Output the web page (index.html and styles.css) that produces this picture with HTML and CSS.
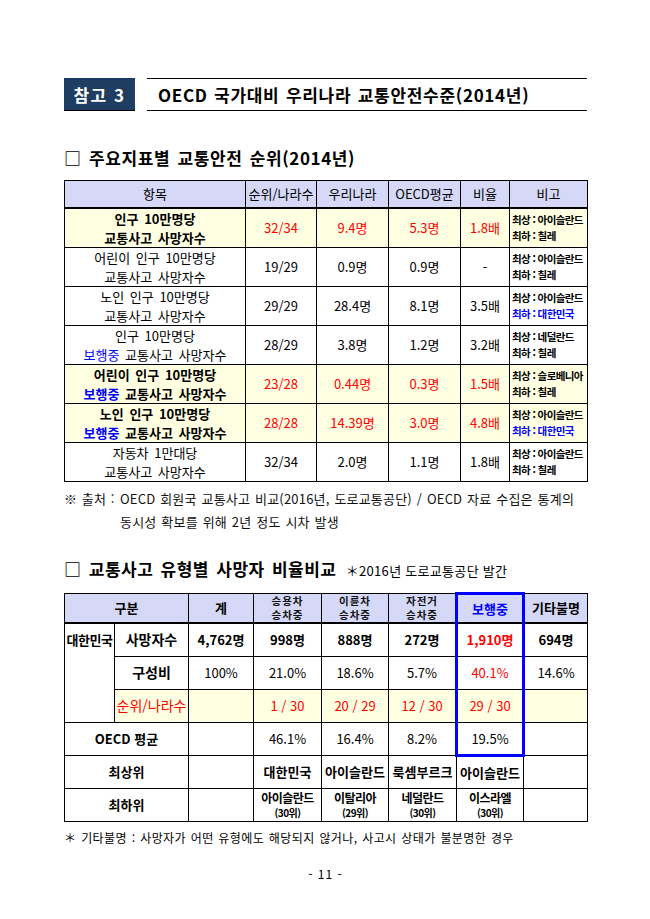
FILE: index.html
```html
<!DOCTYPE html>
<html lang="ko">
<head>
<meta charset="utf-8">
<link rel="stylesheet" href="styles.css">
</head>
<body>
<div class="page">
  <div class="hdr">
    <div class="tag">참고 3</div>
    <div class="title">OECD 국가대비 우리나라 교통안전수준(2014년)</div>
  </div>

  <h2 class="sec sec1">□ 주요지표별 교통안전 순위(2014년)</h2>

  <table class="t1">
    <colgroup>
      <col class="c1a"><col class="c1b"><col class="c1c"><col class="c1d"><col class="c1e"><col class="c1f">
    </colgroup>
    <thead>
      <tr class="th1"><th>항목</th><th>순위/나라수</th><th>우리나라</th><th>OECD평균</th><th>비율</th><th>비고</th></tr>
    </thead>
    <tbody>
      <tr class="hl">
        <td class="item b">인구 10만명당<br>교통사고 사망자수</td>
        <td class="red">32/34</td><td class="red">9.4명</td><td class="red">5.3명</td><td class="red">1.8배</td>
        <td class="note">최상 : 아이슬란드<br>최하 : 칠레</td>
      </tr>
      <tr>
        <td class="item">어린이 인구 10만명당<br>교통사고 사망자수</td>
        <td>19/29</td><td>0.9명</td><td>0.9명</td><td>-</td>
        <td class="note">최상 : 아이슬란드<br>최하 : 칠레</td>
      </tr>
      <tr>
        <td class="item">노인 인구 10만명당<br>교통사고 사망자수</td>
        <td>29/29</td><td>28.4명</td><td>8.1명</td><td>3.5배</td>
        <td class="note">최상 : 아이슬란드<br><span class="blue">최하 : 대한민국</span></td>
      </tr>
      <tr>
        <td class="item">인구 10만명당<br><span class="blue">보행중</span> 교통사고 사망자수</td>
        <td>28/29</td><td>3.8명</td><td>1.2명</td><td>3.2배</td>
        <td class="note">최상 : 네덜란드<br>최하 : 칠레</td>
      </tr>
      <tr class="hl">
        <td class="item b">어린이 인구 10만명당<br><span class="blue">보행중</span> 교통사고 사망자수</td>
        <td class="red">23/28</td><td class="red">0.44명</td><td class="red">0.3명</td><td class="red">1.5배</td>
        <td class="note">최상 : 슬로베니아<br>최하 : 칠레</td>
      </tr>
      <tr class="hl">
        <td class="item b">노인 인구 10만명당<br><span class="blue">보행중</span> 교통사고 사망자수</td>
        <td class="red">28/28</td><td class="red">14.39명</td><td class="red">3.0명</td><td class="red">4.8배</td>
        <td class="note">최상 : 아이슬란드<br><span class="blue">최하 : 대한민국</span></td>
      </tr>
      <tr>
        <td class="item">자동차 1만대당<br>교통사고 사망자수</td>
        <td>32/34</td><td>2.0명</td><td>1.1명</td><td>1.8배</td>
        <td class="note">최상 : 아이슬란드<br>최하 : 칠레</td>
      </tr>
    </tbody>
  </table>

  <div class="src">
    <span class="src-lbl">※ 출처 :</span>
    <span class="src-txt">OECD 회원국 교통사고 비교(2016년, 도로교통공단) / OECD 자료 수집은 통계의<br>동시성 확보를 위해 2년 정도 시차 발생</span>
  </div>

  <h2 class="sec sec2">□ 교통사고 유형별 사망자 비율비교 <span class="sub">＊2016년 도로교통공단 발간</span></h2>

  <table class="t2">
    <colgroup>
      <col class="c2a"><col class="c2b"><col class="c2c"><col class="c2d"><col class="c2e"><col class="c2f"><col class="c2g"><col class="c2h">
    </colgroup>
    <thead>
      <tr class="th2">
        <th colspan="2">구분</th><th>계</th>
        <th class="two"><span class="ln">승용차</span><span class="ln">승차중</span></th>
        <th class="two"><span class="ln">이륜차</span><span class="ln">승차중</span></th>
        <th class="two"><span class="ln">자전거</span><span class="ln">승차중</span></th>
        <th class="bx bx-top blue">보행중</th><th>기타불명</th>
      </tr>
    </thead>
    <tbody>
      <tr class="r2">
        <td rowspan="3" class="kr b">대한민국</td>
        <td class="b lbl">사망자수</td><td class="b">4,762명</td><td class="b">998명</td><td class="b">888명</td><td class="b">272명</td>
        <td class="b red bx">1,910명</td><td class="b">694명</td>
      </tr>
      <tr class="r2">
        <td class="b lbl">구성비</td><td>100%</td><td>21.0%</td><td>18.6%</td><td>5.7%</td>
        <td class="red bx">40.1%</td><td>14.6%</td>
      </tr>
      <tr class="r2 hl">
        <td class="red lbl">순위/나라수</td><td></td><td class="red">1 / 30</td><td class="red">20 / 29</td><td class="red">12 / 30</td>
        <td class="red bx">29 / 30</td><td></td>
      </tr>
      <tr class="r2">
        <td colspan="2" class="b">OECD 평균</td><td></td><td>46.1%</td><td>16.4%</td><td>8.2%</td>
        <td class="bx bx-bot">19.5%</td><td></td>
      </tr>
      <tr class="r2">
        <td colspan="2" class="b">최상위</td><td></td><td class="b">대한민국</td><td class="b">아이슬란드</td><td class="b">룩셈부르크</td>
        <td class="b">아이슬란드</td><td></td>
      </tr>
      <tr class="r2">
        <td colspan="2" class="b">최하위</td><td></td>
        <td class="b low"><span class="nm">아이슬란드</span><span class="rk">(30위)</span></td>
        <td class="b low"><span class="nm">이탈리아</span><span class="rk">(29위)</span></td>
        <td class="b low"><span class="nm">네덜란드</span><span class="rk">(30위)</span></td>
        <td class="b low"><span class="nm">이스라엘</span><span class="rk">(30위)</span></td>
        <td></td>
      </tr>
    </tbody>
  </table>

  <p class="fn">＊ 기타불명 : 사망자가 어떤 유형에도 해당되지 않거나, 사고시 상태가 불분명한 경우</p>

  <p class="pg">- 11 -</p>
</div>
</body>
</html>
```

FILE: styles.css
```css
* { box-sizing: border-box; }
body {
  margin: 0;
  background: #fff;
  font-family: "Noto Sans CJK KR", "Noto Sans", sans-serif;
  color: #000;
}
.page {
  width: 650px;
  padding: 78px 63px 0 64px;
}
.hdr {
  display: flex;
  height: 33px;
}
.tag {
  width: 71px;
  background: #1f3d60;
  color: #fff;
  font-weight: bold;
  font-size: 17px;
  display: flex;
  align-items: center;
  justify-content: center;
  border-bottom: 1px solid #000;
  letter-spacing: 1.5px;
}
.title {
  flex: 1;
  margin-left: 12px;
  border-top: 1px solid #000;
  border-bottom: 1px solid #000;
  display: flex;
  align-items: center;
  padding-left: 11px;
  font-weight: bold;
  font-size: 17px;
  letter-spacing: 0.7px;
  word-spacing: 1px;
}
.sec {
  margin: 0;
  font-size: 17px;
  font-weight: bold;
  line-height: 24px;
  letter-spacing: 0.6px;
  word-spacing: 2px;
}
.sec1 { margin-top: 35px; margin-bottom: 10px; }
.sec2 { margin-top: 24px; margin-bottom: 9px; letter-spacing: 0.5px; }
.sec .sub {
  font-size: 13px;
  font-weight: normal;
  margin-left: 2px;
  letter-spacing: 0.3px;
  word-spacing: 0;
}

table {
  border-collapse: collapse;
  table-layout: fixed;
  width: 523px;
}
th, td {
  border: 1px solid #000;
  padding: 0;
  text-align: center;
  vertical-align: middle;
  font-size: 13px;
  line-height: 17px;
  font-weight: normal;
  white-space: nowrap;
}
.c1a { width: 181px; } .c1b { width: 71px; } .c1c { width: 72px; }
.c1d { width: 72px; } .c1e { width: 49px; } .c1f { width: 78px; }

.th1 th {
  background: #d5d8f6;
  height: 27px;
  border-bottom: 2px solid #000;
}
.t1 tbody td { height: 39px; }
.t1 .item { word-spacing: 2px; line-height: 19px; }
.hl td { background: #ffffe1; }
.b { font-weight: bold; }
.red { color: #ff0000; }
.blue { color: #0000ff; }
.note {
  text-align: left;
  font-size: 10.5px;
  line-height: 15.5px;
  padding-left: 2px;
  font-weight: bold;
  letter-spacing: -0.6px;
}

.src {
  display: flex;
  margin-top: 5px;
  font-size: 13px;
  line-height: 23px;
  color: #111;
}
.src-lbl { width: 56px; flex: none; letter-spacing: 0.5px; }
.src-txt { flex: 1; letter-spacing: 0.2px; word-spacing: 1px; }

.c2a { width: 50px; } .c2b { width: 74px; } .c2c { width: 65px; } .c2d { width: 68px; }
.c2e { width: 67px; } .c2f { width: 68px; } .c2g { width: 67px; } .c2h { width: 64px; }

.th2 th {
  background: #d5d8f6;
  height: 30px;
  font-weight: bold;
  border-bottom: 2px solid #000;
}
.th2 th.two { color: #111; }
.th2 .ln {
  display: block;
  font-size: 10.5px;
  line-height: 14px;
  letter-spacing: 1px;
}
.t2 td { height: 33px; }
.t2 .kr { background: #fff; letter-spacing: -0.5px; vertical-align: top; padding-top: 7px; }
.t2 .lbl { font-size: 14px; }
.bx { border-left: 3px solid #0000ff; border-right: 3px solid #0000ff; }
.bx-top { border-top: 3px solid #0000ff; }
.bx-bot { border-bottom: 3px solid #0000ff; }
.th2 th.bx-top { border-bottom: 2px solid #000; }
.low { letter-spacing: -0.5px; }
.low .nm { display: block; font-size: 12px; line-height: 17.5px; }
.low .rk { display: block; font-size: 10px; line-height: 14.5px; }

.fn {
  margin: 6px 0 0;
  font-size: 12px;
  line-height: 20px;
  letter-spacing: 0.4px;
  word-spacing: 1px;
}
.pg {
  margin: 16px 0 0;
  text-align: center;
  font-size: 12px;
  line-height: 20px;
  letter-spacing: 1px;
}
```
